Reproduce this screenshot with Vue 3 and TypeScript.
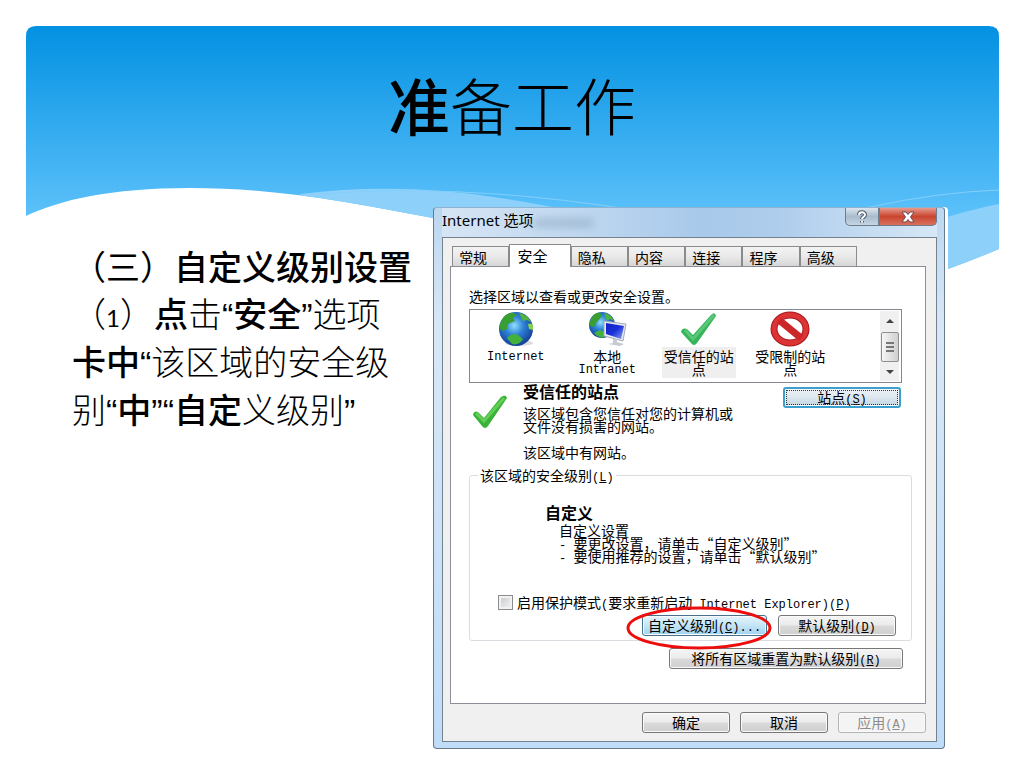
<script setup lang="ts">
import { ref } from 'vue'

interface Zone {
  id: string
  lines: string[]
}

const tabs: string[] = ['常规', '安全', '隐私', '内容', '连接', '程序', '高级']
const activeTab = ref('安全')

const zones: Zone[] = [
  { id: 'internet', lines: ['Internet'] },
  { id: 'intranet', lines: ['本地', 'Intranet'] },
  { id: 'trusted', lines: ['受信任的站', '点'] },
  { id: 'restricted', lines: ['受限制的站', '点'] },
]
const activeZone = ref('trusted')
const protectedMode = ref(false)

const isLatin = (text: string): boolean => /^[A-Za-z]+$/.test(text)
</script>

<template>
  <main class="slide">
    <svg class="backdrop" viewBox="0 0 1024 300" preserveAspectRatio="none" aria-hidden="true">
      <defs>
        <linearGradient id="sky" x1="0" y1="26" x2="0" y2="216" gradientUnits="userSpaceOnUse">
          <stop offset="0" stop-color="#0391e2" />
          <stop offset="1" stop-color="#5cc1fa" />
        </linearGradient>
        <clipPath id="card">
          <path d="M26 36Q26 26 36 26H989Q999 26 999 36V249Q973 260 948 269C760 330 560 245 433 218C350 203 280 188 190 188C110 188 60 200 26 216Z" />
        </clipPath>
      </defs>
      <g clip-path="url(#card)">
        <rect x="26" y="26" width="973" height="274" fill="url(#sky)" />
        <path d="M300 194Q400 182 500 198C620 216 700 245 800 245C880 245 940 215 999 204V300H300Z" fill="#8dd1fb" />
        <path d="M320 194Q450 184 600 205Q740 228 870 207Q940 192 999 190" fill="none" stroke="#84cefb" stroke-width="1" />
      </g>
    </svg>

    <h1>准<span class="thin">备工作</span></h1>

    <div class="content">
      <section class="notes">
        <h2>（三）<b>自定义级别设置</b></h2>
        <p>
          （<span class="digit">1</span>）<b>点</b>击<q>“</q><b>安全</b><q>”</q>选项<br />
          <b>卡中</b><q>“</q>该区域的安全级<br />
          别<q>“</q><b>中</b><q>”“</q><b>自定</b>义级别<q>”</q>
        </p>
      </section>

      <section class="dialog" aria-label="Internet 选项">
        <header class="titlebar">
          <span class="caption">Internet 选项</span>
          <span class="ghost"></span>
          <div class="window-buttons">
            <button class="help" aria-label="帮助">
              <svg viewBox="0 0 14 14" width="14" height="14">
                <path d="M4 5C4 1.5 10 1.5 10 4.8C10 7 7 7 7 9M7 11V12.4" fill="none" stroke="#505966" stroke-width="4" />
                <path d="M4 5C4 1.5 10 1.5 10 4.8C10 7 7 7 7 9M7 11V12.4" fill="none" stroke="#fff" stroke-width="2" />
              </svg>
            </button>
            <button class="close" aria-label="关闭">
              <svg viewBox="0 0 16 12" width="16" height="12">
                <path d="M2 1H6L8 3.500L10 1H14L10.500 6L14 11H10L8 8.500L6 11H2L5.500 6Z" fill="#fff" stroke="#6b4a50" />
              </svg>
            </button>
          </div>
        </header>

        <div class="client">
          <nav class="tabs" role="tablist">
            <button
              v-for="tab in tabs"
              :key="tab"
              role="tab"
              :aria-selected="tab === activeTab"
              :class="{ active: tab === activeTab }"
              @click="activeTab = tab"
            >{{ tab }}</button>
          </nav>

          <div class="panel">
            <p class="prompt">选择区域以查看或更改安全设置。</p>

            <div class="zone-list">
              <button
                v-for="zone in zones"
                :key="zone.id"
                class="zone"
                :class="{ selected: zone.id === activeZone }"
                @click="activeZone = zone.id"
              >
                <svg v-if="zone.id === 'internet' || zone.id === 'intranet'" viewBox="0 0 42 36" width="42" height="36">
                  <defs>
                    <radialGradient :id="'globe-' + zone.id" cx="0.45" cy="0.4" r="0.6">
                      <stop offset="0" stop-color="#8fe0fa" />
                      <stop offset="0.45" stop-color="#2f83d8" />
                      <stop offset="1" stop-color="#123f96" />
                    </radialGradient>
                    <linearGradient id="screen" x1="0" y1="0" x2="1" y2="1">
                      <stop offset="0" stop-color="#1023c8" />
                      <stop offset="0.5" stop-color="#1b30d8" />
                      <stop offset="1" stop-color="#86a6f6" />
                    </linearGradient>
                  </defs>
                  <g v-if="zone.id === 'internet'">
                    <ellipse cx="24" cy="32" rx="14" ry="3" fill="#dcdcdc" />
                    <circle cx="21" cy="18" r="17" :fill="`url(#globe-${zone.id})`" />
                    <path d="M5 14C7 5 13 1 18 2L22 4L18 7L20 10L13 13L12 18L8 20L5 18Z" fill="#399f32" />
                    <path d="M24 2Q32 3 36 11L32 9L28 10L26 6Z" fill="#51b43c" />
                    <path d="M33 13Q39 11 38 19L34 18Z" fill="#84d34a" />
                    <path d="M12 27Q17 21 23 24L28 28Q24 35 17 33Z" fill="#43b13b" />
                  </g>
                  <g v-else>
                    <circle cx="16" cy="14" r="13" :fill="`url(#globe-${zone.id})`" />
                    <path d="M4 11C6 4 10 1 14 2L16 5L11 11L8 16L4 15Z" fill="#399f32" />
                    <path d="M18 2Q25 3 28 10L24 8L21 10Z" fill="#51b43c" />
                    <path d="M8 22L14 19L20 22L17 27Q11 26 8 22Z" fill="#43b13b" />
                    <path d="M18 10L40 13L37 30L18 25Z" fill="#e5e8ee" stroke="#a4abb9" />
                    <path d="M20 12L38 15L35 28L20 23Z" fill="url(#screen)" />
                    <path d="M27 28V32L22 33L34 35L38 33L31 31V28Z" fill="#c5cad3" />
                  </g>
                </svg>
                <svg v-else-if="zone.id === 'trusted'" viewBox="0 0 42 36" width="42" height="36">
                  <path d="M3 21Q4 16 9 18L15 24L33 4Q37 0 38 5L19 32Q16 36 13 32Z" fill="#35b45a" />
                  <path d="M7 19L15 28L36 4" fill="none" stroke="#70d589" stroke-width="3" opacity="0.600" />
                </svg>
                <svg v-else viewBox="0 0 42 36" width="42" height="36">
                  <ellipse cx="21" cy="18" rx="16" ry="14" fill="#fff" stroke="#a8181c" stroke-width="7" />
                  <ellipse cx="21" cy="18" rx="16" ry="14" fill="none" stroke="#dc3335" stroke-width="5" />
                  <path d="M10 9L32 27" stroke="#cc2629" stroke-width="7" />
                </svg>
                <span class="zone-label">
                  <span v-for="line in zone.lines" :key="line" :class="{ word: isLatin(line) }">{{ line }}</span>
                </span>
              </button>
              <div class="scrollbar" aria-hidden="true">
                <svg viewBox="0 0 10 6" width="10" height="6"><path d="M1 5L5 1L9 5Z" fill="#444" /></svg>
                <span class="thumb"><i></i><i></i><i></i></span>
                <svg viewBox="0 0 10 6" width="10" height="6"><path d="M1 1L5 5L9 1Z" fill="#444" /></svg>
              </div>
            </div>

            <div class="zone-info">
              <svg class="tick" viewBox="0 0 42 36" width="42" height="36">
                <path d="M4 21Q5 16 9 18L15 24L32 3Q37 0 38 4L19 32Q16 36 13 32Z" fill="#38b337" />
                <path d="M7 19L15 27L35 4" fill="none" stroke="#7ee06a" stroke-width="3" opacity="0.600" />
              </svg>
              <div class="zone-text">
                <h3>受信任的站点</h3>
                <p>该区域包含您信任对您的计算机或<br />文件没有损害的网站。</p>
                <p class="has-sites">该区域中有网站。</p>
              </div>
              <button class="btn sites">站点<span class="latin">(<u>S</u>)</span></button>
            </div>

            <fieldset class="level">
              <legend>该区域的安全级别<span class="latin">(<u>L</u>)</span></legend>
              <div class="custom">
                <h3>自定义</h3>
                <p>自定义设置<br /><span class="latin">- </span>要更改设置，请单击“自定义级别”<br /><span class="latin">- </span>要使用推荐的设置，请单击“默认级别”</p>
              </div>
              <label class="protect">
                <input v-model="protectedMode" type="checkbox" />
                <span>启用保护模式<span class="latin">(</span>要求重新启动<span class="latin"> Internet Explorer)(<u>P</u>)</span></span>
              </label>
              <div class="level-buttons">
                <button class="btn custom-level">自定义级别<span class="latin">(<u>C</u>)...</span>
                  <svg class="ring" viewBox="0 0 146 46" width="146" height="46" aria-hidden="true">
                    <ellipse cx="73" cy="23" rx="71" ry="20" fill="none" stroke="#ee0d0d" stroke-width="3" />
                  </svg>
                </button>
                <button class="btn default-level">默认级别<span class="latin">(<u>D</u>)</span></button>
              </div>
            </fieldset>
            <button class="btn reset">将所有区域重置为默认级别<span class="latin">(<u>R</u>)</span></button>
          </div>

          <footer class="actions">
            <button class="btn">确定</button>
            <button class="btn">取消</button>
            <button class="btn" disabled>应用<span class="latin">(<u>A</u>)</span></button>
          </footer>
        </div>
      </section>
    </div>
  </main>
</template>

<style>
body {
  margin: 0;
  background: #fff;
}
</style>

<style scoped>
* {
  box-sizing: border-box;
}
h1, h2, h3, p {
  margin: 0;
  font-weight: 400;
}
button {
  font: inherit;
  color: inherit;
  padding: 0;
}
.slide {
  position: relative;
  min-height: 100vh;
  overflow: hidden;
  color: #000;
  font-family: "Noto Sans CJK SC", sans-serif;
}
.backdrop {
  position: absolute;
  top: 0;
  left: 0;
  width: 100%;
  height: 300px;
}
h1 {
  position: relative;
  padding-top: 58px;
  height: 207px;
  font-size: 62px;
  line-height: 92px;
  font-weight: 500;
  text-align: center;
}
.thin {
  font-weight: 300;
}
.content {
  position: relative;
  display: grid;
  grid-template-columns: 361fr 512fr;
  padding: 0 79px 20px 72px;
}
.notes {
  padding-top: 36px;
  font-size: 34px;
  line-height: 48px;
  white-space: nowrap;
}
.notes h2 {
  font-size: 34px;
  line-height: 46px;
}
.notes p {
  font-weight: 300;
}
.notes b {
  font-weight: 500;
}
.notes q {
  quotes: none;
  font-family: "Liberation Sans", sans-serif;
  line-height: 0;
}
.notes q::before,
.notes q::after {
  content: none;
}
.digit {
  font-family: Lato, sans-serif;
  font-size: 24px;
  line-height: 0;
  font-weight: 400;
}
.dialog {
  display: flex;
  flex-direction: column;
  min-width: 0;
  padding: 0 7px 6px 8px;
  border: 1px solid #68798a;
  border-top-color: #8fb4d0;
  border-radius: 4px;
  background: linear-gradient(#bcd7f0, #d8e7f6 120px, #bfdcf8);
  box-shadow: 3px 0 0 #fff;
  font-size: 14px;
  line-height: 18px;
}
.titlebar {
  display: flex;
  justify-content: space-between;
  height: 29px;
  background: linear-gradient(90deg, #d6e5f4, #bdd6ef 30%, #a9c9eb 52%, #aecdec 68%, #d6e7f6);
}
.caption {
  padding-top: 3px;
  font-family: "Noto Sans", "Noto Sans CJK SC", sans-serif;
  font-size: 15px;
  line-height: 18px;
}
.ghost {
  width: 60px;
  height: 8px;
  margin: 11px auto 0 0;
  background: #6d8ba8;
  opacity: 0.4;
  filter: blur(4px);
}
.window-buttons {
  display: flex;
  height: 18px;
}
.window-buttons button {
  display: flex;
  align-items: center;
  justify-content: center;
  border: 1px solid #6e7d8c;
  border-top: 0;
}
.help {
  width: 34px;
  border-radius: 0 0 0 5px;
  background: linear-gradient(#dce5ee, #a9bccd 50%, #c5d5e4);
}
.close {
  width: 58px;
  border-radius: 0 0 5px 0;
  background: linear-gradient(#e79a8d, #c9452f 50%, #d9715d);
}
.client {
  padding: 6px 10px 8px 7px;
  border: 1px solid #74828f;
  background: #f0f0f0;
}
.tabs {
  display: flex;
  align-items: flex-end;
  height: 22px;
  padding: 0 69px 0 2px;
}
.tabs button {
  flex: 57 1 0;
  height: 20px;
  padding-right: 15px;
  border: 1px solid #8b8b8b;
  border-bottom: 0;
  background: linear-gradient(#f3f3f3, #e9e9e9 50%, #d6d6d6);
  line-height: 18px;
}
.tabs .active {
  flex-grow: 63;
  height: 23px;
  margin-bottom: -1px;
  background: #fff;
  font-size: 15px;
}
.panel {
  display: flex;
  flex-direction: column;
  padding: 20px 13px 34px 18px;
  border: 1px solid #8b8e96;
  background: #fff;
}
.prompt {
  height: 22px;
}
.zone-list {
  display: flex;
  height: 74px;
  margin-right: 10px;
  padding: 1px 2px 1px 0;
  border: 1px solid #828790;
}
.zone {
  display: flex;
  flex: 1;
  flex-direction: column;
  align-items: center;
  border: 0;
  background: none;
}
.zone svg {
  flex: none;
}
.zone-label {
  display: flex;
  flex-direction: column;
  align-items: center;
  padding: 3px 2px 2px;
  line-height: 13px;
}
.selected .zone-label {
  background: #efefef;
}
.latin,
.word {
  font-family: "Liberation Mono", monospace;
  font-size: 12px;
}
.word {
  line-height: 15px;
}
.latin {
  line-height: 0;
}
.scrollbar {
  display: flex;
  flex: none;
  flex-direction: column;
  align-items: center;
  justify-content: space-between;
  width: 19px;
  margin-left: 44px;
  padding: 7px 0 6px;
  background: #f0f0f0;
}
.thumb {
  display: flex;
  flex-direction: column;
  align-items: center;
  justify-content: center;
  gap: 2px;
  width: 18px;
  height: 30px;
  border: 1px solid #8f8f8f;
  border-radius: 2px;
  background: linear-gradient(90deg, #f6f6f6, #cfcfcf);
}
.thumb i {
  width: 8px;
  height: 2px;
  background: #777;
}
.zone-info {
  display: flex;
  height: 83px;
}
.tick {
  flex: none;
  margin: 11px 12px 0 0;
}
.zone-text {
  flex: 1;
  line-height: 13px;
  white-space: nowrap;
}
.zone-text h3,
.custom h3 {
  font-size: 16px;
  line-height: 16px;
  font-weight: 700;
}
.zone-text p {
  padding-top: 8px;
}
.zone-text .has-sites {
  padding-top: 13px;
}
.btn {
  height: 21px;
  border: 1px solid #777;
  border-radius: 3px;
  background: linear-gradient(#f5f5f5, #ebebeb 48%, #dadada 52%, #cfcfcf);
  box-shadow: inset 0 0 0 1px #fafafa;
  line-height: 17px;
  white-space: nowrap;
}
.btn:disabled {
  border-color: #b4b4b4;
  background: #f4f4f4;
  color: #8c8c8c;
}
.sites {
  width: 118px;
  margin: 4px 11px 0 0;
  border: 2px solid #3b9fce;
  outline: 1px dotted #333;
  outline-offset: -4px;
  background: linear-gradient(#edf3f7, #dce7ee 50%, #c3d5e0);
  line-height: 15px;
}
.level {
  min-width: 0;
  height: 175px;
  margin: 0;
  padding: 20px 15px 0 28px;
  border: 1px solid #d9dce0;
  border-radius: 3px;
}
.level legend {
  margin-left: -20px;
  padding: 0 2px;
}
.custom {
  margin-left: 47px;
}
.custom p {
  padding: 4px 0 0 14px;
  line-height: 13px;
  white-space: nowrap;
}
.protect {
  display: flex;
  align-items: center;
  gap: 4px;
  margin-top: 30px;
  white-space: nowrap;
}
.protect input {
  appearance: none;
  flex: none;
  width: 15px;
  height: 15px;
  margin: 0;
  border: 1px solid #8c8c8c;
  background: linear-gradient(135deg, #c4c9ce, #f6f6f6);
  box-shadow: inset 0 0 0 2px #f2f2f2;
}
.protect input:checked {
  background: #3b7fb8;
}
.level-buttons {
  display: flex;
  justify-content: flex-end;
  gap: 11px;
  margin-top: 4px;
}
.custom-level {
  position: relative;
  width: 125px;
  border-color: #47718c;
  background: linear-gradient(#e5f4fc, #c4e5f6 50%, #9ed3f0);
}
.ring {
  position: absolute;
  top: -11px;
  left: -17px;
}
.default-level {
  width: 118px;
}
.reset {
  align-self: flex-end;
  width: 234px;
  margin: 7px 9px 0 0;
}
.actions {
  display: flex;
  justify-content: flex-end;
  gap: 10px;
  padding-top: 8px;
}
.actions .btn {
  width: 88px;
}
</style>
